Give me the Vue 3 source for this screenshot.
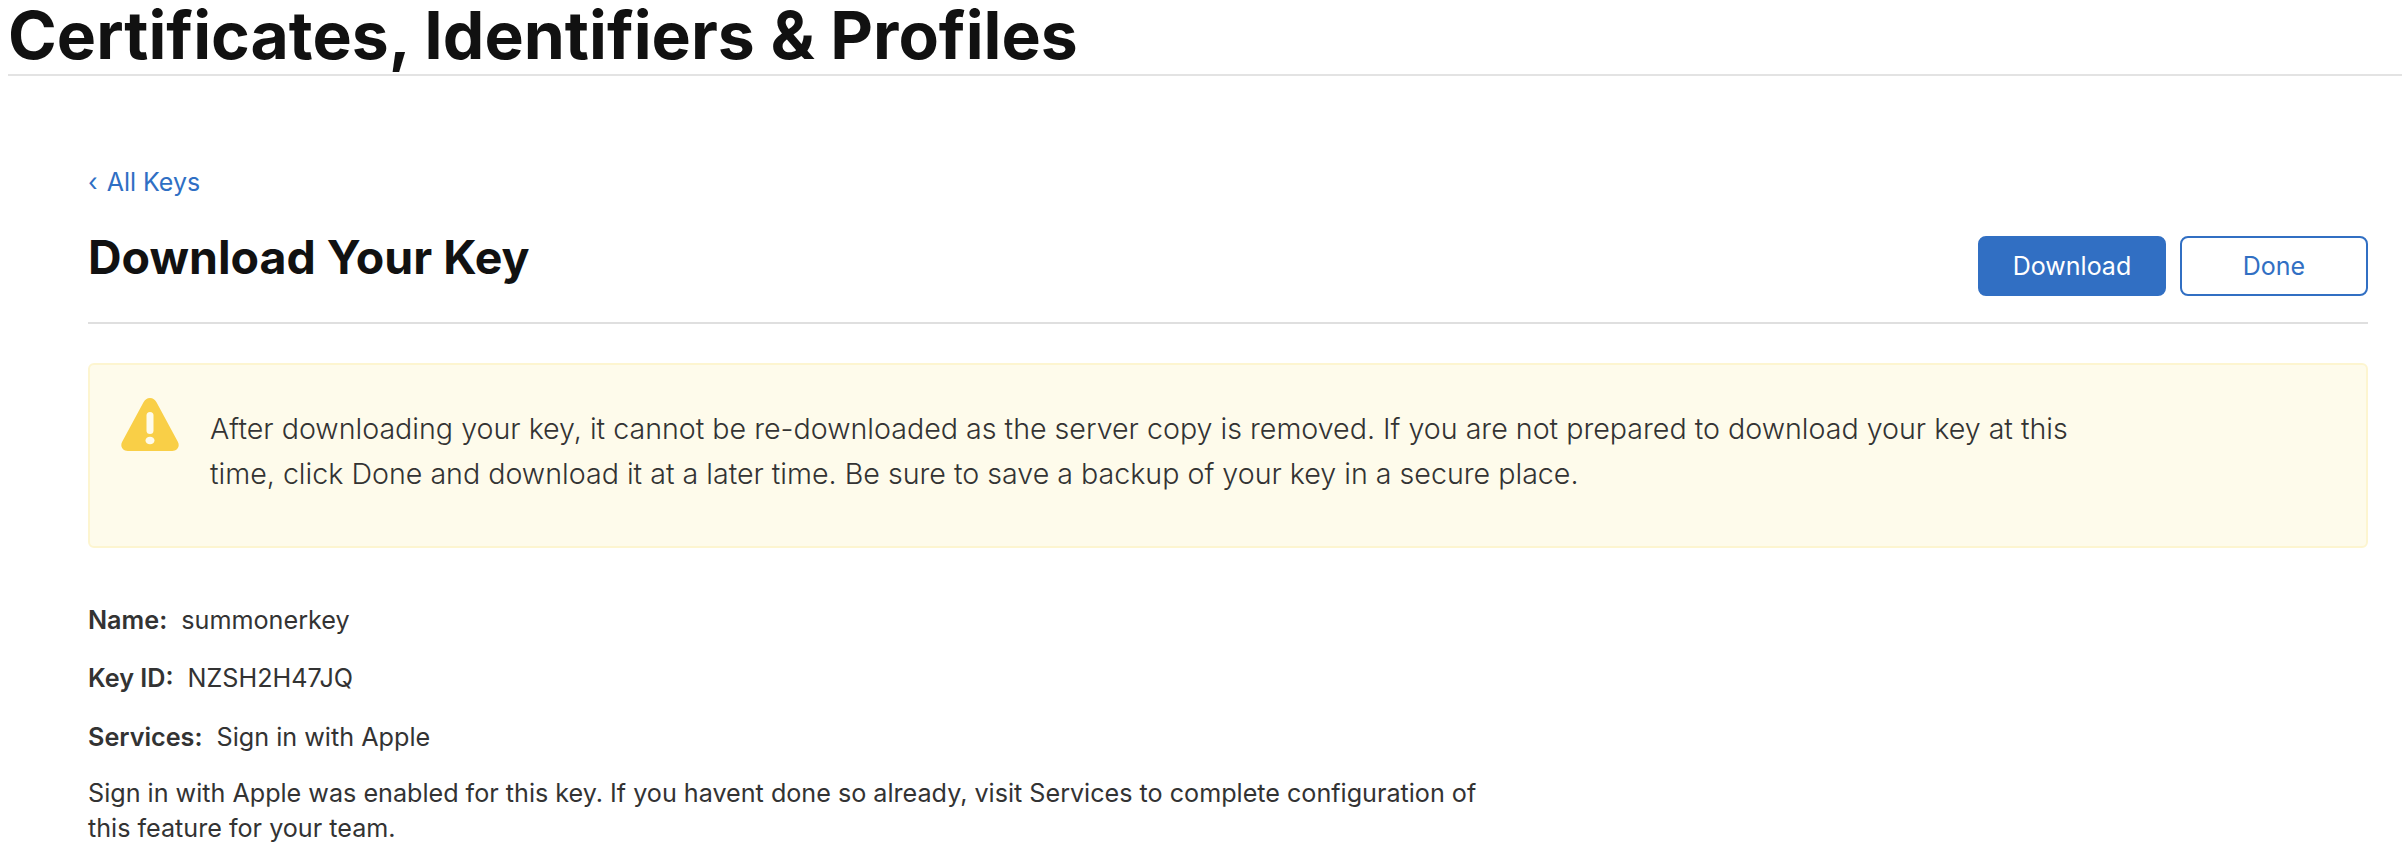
<script setup>
const details = [
  { label: 'Name:', value: 'summonerkey' },
  { label: 'Key ID:', value: 'NZSH2H47JQ' },
  { label: 'Services:', value: 'Sign in with Apple' },
]
</script>

<template>
  <div class="page">
    <header class="top">
      <h1>Certificates, Identifiers &amp; Profiles</h1>
    </header>
    <main class="content">
      <a class="back"><span class="chev">‹</span> All Keys</a>
      <div class="head">
        <h2>Download Your Key</h2>
        <div class="actions">
          <button class="btn primary">Download</button>
          <button class="btn outline">Done</button>
        </div>
      </div>
      <section class="alert">
        <svg class="warn" viewBox="0 0 58 53" width="58" height="53">
          <path fill="#f9cf47" d="M29 0c3 0 5 1.700 6.500 4.300L56.700 43.500c2.700 4.800-.4 9.500-5.500 9.500H6.800C1.700 53-1.400 48.300 1.300 43.500L22.500 4.300C24 1.700 26 0 29 0z"/>
          <rect x="25.500" y="14" width="7" height="22" rx="3.500" fill="#fefbeb"/>
          <ellipse cx="29" cy="42.500" rx="4.500" ry="3.800" fill="#fefbeb"/>
        </svg>
        <p>After downloading your key, it cannot be re-downloaded as the server copy is removed. If you are not prepared to download your key at this time, click Done and download it at a later time. Be sure to save a backup of your key in a secure place.</p>
      </section>
      <div class="details">
        <p v-for="d in details" :key="d.label" class="row"><strong>{{ d.label }}</strong><span>{{ d.value }}</span></p>
      </div>
      <p class="note">Sign in with Apple was enabled for this key. If you havent done so already, visit Services to complete configuration of this feature for your team.</p>
    </main>
  </div>
</template>

<style scoped>
.page {
  width: 2402px;
  height: 866px;
  overflow: hidden;
  background: #fff;
  font-family: Inter, "Liberation Sans", sans-serif;
  color: #333;
}
.top {
  margin-left: 8px;
  height: 74px;
  border-bottom: 2px solid #e3e3e3;
}
h1 {
  margin: 0;
  font-size: 66px;
  line-height: 70px;
  font-weight: 700;
  color: #111;
  white-space: nowrap;
}
.content {
  padding: 88px 34px 0 88px;
}
.back {
  display: block;
  font-size: 25px;
  line-height: 36px;
  color: #2f6fc4;
}
.chev {
  margin-right: 2px;
}
.head {
  display: flex;
  justify-content: space-between;
  align-items: flex-start;
  height: 121px;
  margin-top: 1px;
  border-bottom: 2px solid #dfdfdf;
}
h2 {
  margin: 28px 0 0;
  font-size: 46.5px;
  line-height: 56px;
  font-weight: 700;
  color: #111;
}
.actions {
  display: flex;
  gap: 14px;
  margin-top: 35px;
}
.btn {
  width: 188px;
  height: 60px;
  border-radius: 8px;
  font-family: inherit;
  font-size: 25px;
  box-sizing: border-box;
  border: 2px solid #316fc3;
}
.primary {
  background: #316fc3;
  color: #fff;
}
.outline {
  background: #fff;
  color: #316fc3;
}
.alert {
  display: flex;
  align-items: flex-start;
  margin-top: 39px;
  height: 185px;
  box-sizing: border-box;
  background: #fefbeb;
  border: 2px solid #fdf5d0;
  border-radius: 6px;
  padding: 33px 0 0 31px;
}
.warn {
  flex: none;
}
.alert p {
  margin: 8px 0 0 31px;
  width: 1880px;
  font-size: 28.62px;
  line-height: 45px;
  font-weight: 300;
  color: #333;
}
.details {
  margin-top: 55px;
}
.row {
  display: flex;
  gap: 14px;
  margin: 0 0 24px;
  font-size: 25.2px;
  line-height: 34px;
}
.row:nth-child(2) {
  margin-bottom: 25px;
}
.row strong {
  font-weight: 600;
}
.note {
  margin: -2px 0 0;
  width: 1420px;
  font-size: 25.15px;
  line-height: 35px;
}
</style>
